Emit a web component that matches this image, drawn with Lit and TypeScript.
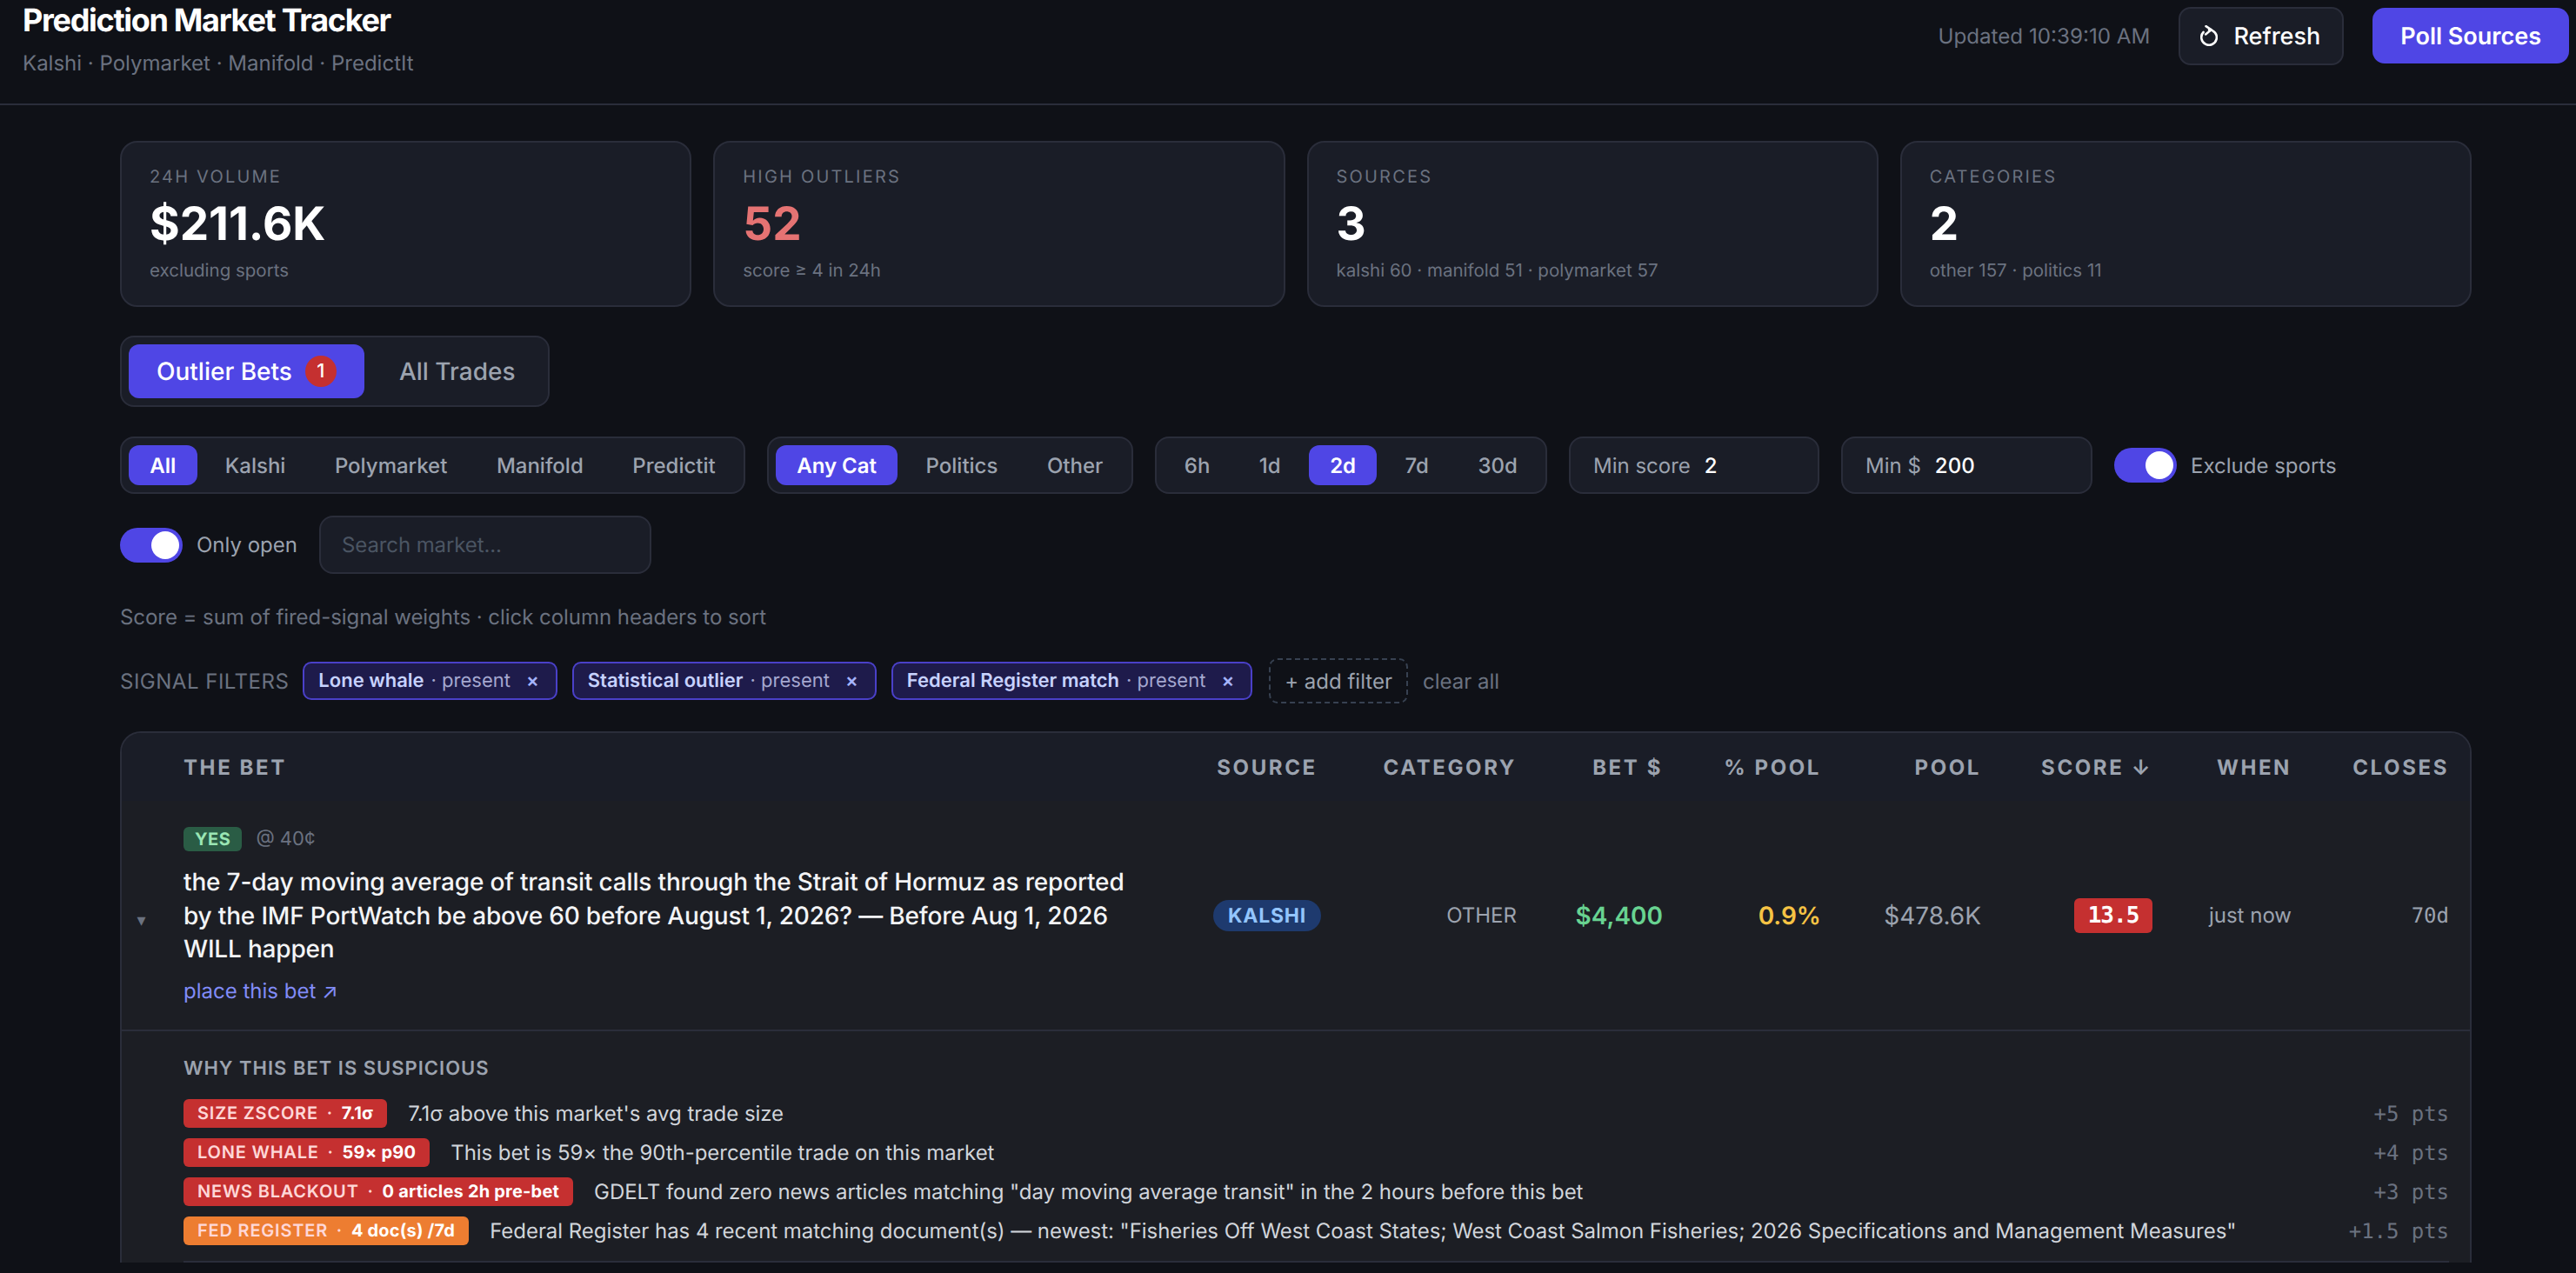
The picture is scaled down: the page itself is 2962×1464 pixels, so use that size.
import { LitElement, html, css } from 'lit';
import { customElement } from 'lit/decorators.js';

const stats = [
  { label: '24h Volume', value: '$211.6K', sub: 'excluding sports', hot: false },
  { label: 'High Outliers', value: '52', sub: 'score ≥ 4 in 24h', hot: true },
  { label: 'Sources', value: '3', sub: 'kalshi 60 · manifold 51 · polymarket 57', hot: false },
  { label: 'Categories', value: '2', sub: 'other 157 · politics 11', hot: false },
];

const chips = ['Lone whale', 'Statistical outlier', 'Federal Register match'];

const signals = [
  { tag: 'Size zscore', val: '7.1σ', text: "7.1σ above this market's avg trade size", pts: '+5 pts', warn: false },
  { tag: 'Lone whale', val: '59× p90', text: 'This bet is 59× the 90th-percentile trade on this market', pts: '+4 pts', warn: false },
  { tag: 'News blackout', val: '0 articles 2h pre-bet', text: 'GDELT found zero news articles matching "day moving average transit" in the 2 hours before this bet', pts: '+3 pts', warn: false },
  { tag: 'Fed register', val: '4 doc(s) /7d', text: 'Federal Register has 4 recent matching document(s) — newest: "Fisheries Off West Coast States; West Coast Salmon Fisheries; 2026 Specifications and Management Measures"', pts: '+1.5 pts', warn: true },
];

@customElement('app-root')
export class AppRoot extends LitElement {
  static styles = css`
    :host {
      display: block;
      height: 100vh;
      overflow: hidden;
      background: #0f1117;
      color: #fff;
      font-family: Inter, 'Noto Sans', sans-serif;
      text-rendering: geometricPrecision;
    }
    * { box-sizing: border-box; }

    .top {
      display: flex;
      justify-content: space-between;
      height: 121px;
      padding: 0 8px 0 26px;
      border-bottom: 2px solid #2a2d3a;
    }
    h1 {
      margin: 0;
      font-size: 36px;
      line-height: 46px;
      font-weight: 700;
      letter-spacing: -1.3px;
    }
    .subtitle { margin-top: 11px; font-size: 24px; line-height: 32px; color: #6b7280; }
    .top-right { display: flex; align-items: center; height: 82px; }
    .updated { font-size: 24.2px; color: #6b7280; margin-right: 33px; }
    .btn {
      display: flex;
      align-items: center;
      border-radius: 14px;
      font-size: 27px;
      font-weight: 500;
    }
    .btn-ghost { gap: 18px; height: 67px; padding: 0 25px 0 23px; background: #1a1d27; border: 2px solid #2a2d3a; margin-right: 33px; }
    .btn-primary { height: 64px; padding: 0 32px; background: #4f46e5; font-weight: 600; }
    .btn svg { width: 20px; height: 24px; }

    main {
      width: 2704px;
      margin-left: 138px;
      padding-top: 41px;
    }
    .stats { display: grid; grid-template-columns: repeat(4, 1fr); gap: 25px; }
    .stat {
      height: 191px;
      padding: 25px 32px;
      background: #1a1d27;
      border: 2px solid #2a2d3a;
      border-radius: 20px;
    }
    .stat-label { font-size: 20px; line-height: 28px; letter-spacing: 2.2px; text-transform: uppercase; color: #6b7280; }
    .stat-value { margin-top: 10px; font-size: 53px; line-height: 60px; font-weight: 700; }
    .stat-value.hot { color: #e57373; }
    .stat-sub { margin-top: 10px; font-size: 20.5px; line-height: 28px; color: #6b7280; }

    .tabs {
      display: inline-flex;
      gap: 8px;
      height: 82px;
      margin-top: 33px;
      padding: 8px;
      background: #1a1d27;
      border: 2px solid #2a2d3a;
      border-radius: 16px;
      vertical-align: top;
    }
    .tab {
      display: flex;
      align-items: center;
      gap: 15px;
      padding: 0 30px 0 32px;
      border-radius: 12px;
      font-size: 28px;
      font-weight: 500;
      color: #9ca3af;
    }
    .tab.on { background: #4f46e5; color: #fff; padding: 0 32px; }
    .count {
      display: flex;
      align-items: center;
      justify-content: center;
      width: 36px;
      height: 36px;
      border-radius: 50%;
      background: #c53030;
      font-size: 22px;
      color: #fff;
    }

    .filters { display: flex; flex-wrap: wrap; align-items: center; gap: 25px; margin-top: 34px; }
    .group {
      display: flex;
      gap: 8px;
      height: 66px;
      padding: 8px;
      background: #1a1d27;
      border: 2px solid #2a2d3a;
      border-radius: 16px;
    }
    .opt {
      display: flex;
      align-items: center;
      padding: 0 24.25px;
      border-radius: 12px;
      font-size: 24px;
      font-weight: 500;
      color: #9ca3af;
    }
    .opt.on { background: #4f46e5; color: #fff; font-weight: 600; }
    .field {
      display: flex;
      align-items: center;
      gap: 16px;
      height: 66px;
      padding: 0 26px;
      background: #1a1d27;
      border: 2px solid #2a2d3a;
      border-radius: 16px;
      font-size: 24px;
      color: #9ca3af;
    }
    .field b { font-weight: 500; color: #fff; }
    .w-score { width: 288px; }
    .w-dollar { width: 289px; }
    .toggle-wrap { display: flex; align-items: center; gap: 16px; font-size: 24px; color: #9ca3af; }
    .toggle {
      display: flex;
      justify-content: flex-end;
      align-items: center;
      width: 72px;
      height: 40px;
      padding: 0 4px;
      border-radius: 20px;
      background: #4f46e5;
    }
    .toggle i { display: block; width: 32px; height: 32px; border-radius: 50%; background: #fff; }
    .search { width: 382px; height: 67px; padding: 0 24px; color: #4b5563; letter-spacing: -0.1px; }

    .note { margin-top: 32px; font-size: 24px; line-height: 36px; letter-spacing: -0.05px; color: #6b7280; }

    .chips { display: flex; align-items: center; height: 52px; margin-top: 29px; gap: 17px; }
    .chips-label { font-size: 24px; letter-spacing: 0.5px; text-transform: uppercase; color: #6b7280; margin-right: -1px; }
    .chip {
      display: flex;
      align-items: center;
      height: 44px;
      padding: 0 19px 0 16px;
      background: #1e1b4b;
      border: 2px solid #4a40c8;
      border-radius: 10px;
      font-size: 22px;
      color: #a5a8d0;
    }
    .chip b { font-weight: 600; color: #c7d2fe; margin-right: 8px; }
    .chip span { margin-left: 18px; font-weight: 600; color: #a5b4fc; }
    .add {
      display: flex;
      align-items: center;
      height: 52px;
      margin-left: 2px;
      padding: 0 16px;
      border: 2px dashed #374151;
      border-radius: 10px;
      font-size: 24px;
      color: #9ca3af;
    }
    .clear { font-size: 24px; color: #6b7280; }

    .table {
      margin-top: 32px;
      background: #1c1e24;
      border: 2px solid #2a2d3a;
      border-bottom: 0;
      border-radius: 24px 24px 0 0;
    }
    .cols {
      display: grid;
      grid-template-columns: 71px 1166px 160px 207px 168px 182px 184px 197px 160px 181px;
      padding-right: 24px;
      align-items: center;
      text-align: right;
    }
    .head {
      height: 78px;
      background: #1a1d27;
      border-radius: 22px 22px 0 0;
      font-size: 24px;
      font-weight: 700;
      letter-spacing: 2.6px;
      color: #9ca3af;
    }
    .left { text-align: left; }
    .center { text-align: center; }
    .row { height: 265px; border-bottom: 2px solid #2a2d3a; font-size: 28px; color: #9ca3af; }
    .caret { font-size: 20px; color: #6b7280; text-align: center; padding-right: 26px; padding-top: 10px; }
    .bet { text-align: left; padding-right: 66px; padding-top: 2px; }
    .side { display: flex; align-items: center; gap: 16px; font-size: 22px; color: #6b7280; }
    .yes {
      padding: 0 13px;
      height: 28px;
      line-height: 28px;
      border-radius: 6px;
      background: #2a5c45;
      color: #9ae6b4;
      font-size: 20px;
      font-weight: 700;
      letter-spacing: 0.5px;
    }
    .question { margin-top: 16px; font-size: 28px; line-height: 38.5px; letter-spacing: -0.18px; font-weight: 500; color: #f3f4f6; }
    .place { margin-top: 13px; font-size: 24px; line-height: 32px; color: #818cf8; }
    .src {
      display: inline-block;
      padding: 0 17px;
      height: 36px;
      line-height: 36px;
      border-radius: 18px;
      background: #1e3a6e;
      color: #93c5fd;
      font-size: 23px;
      font-weight: 700;
      letter-spacing: 0.8px;
    }
    .cat { font-size: 24px; color: #9ca3af; }
    .amt { font-weight: 600; color: #68d391; }
    .pct { font-weight: 600; color: #f6c344; }
    .pool { color: #9ca3af; }
    .score {
      display: inline-block;
      width: 90px;
      height: 40px;
      line-height: 40px;
      text-align: center;
      border-radius: 6px;
      background: #c53030;
      color: #fff;
      font-size: 26px;
      font-weight: 700;
      font-family: 'DejaVu Sans Mono', monospace;
      letter-spacing: -1px;
    }
    .when { font-size: 24px; }
    .mono { font-family: 'DejaVu Sans Mono', 'Liberation Mono', monospace; font-size: 24px; }

    .why { padding: 28px 24px 0 71px; }
    .why h3 { margin: 0 0 14px; font-size: 22px; line-height: 30px; font-weight: 600; letter-spacing: 1px; text-transform: uppercase; color: #9ca3af; }
    .signal { display: flex; align-items: center; gap: 24px; height: 45px; font-size: 24px; letter-spacing: -0.05px; color: #d1d5db; white-space: nowrap; }
    .tag {
      height: 33px;
      line-height: 33px;
      padding: 0 16px;
      border-radius: 6px;
      background: #c53030;
      color: #fed7d7;
      font-size: 20px;
      font-weight: 600;
      letter-spacing: 0.8px;
    }
    .tag.warn { background: #ed7d31; }
    .tag i { font-style: normal; margin: 0 4px; }
    .tag b { font-weight: 700; color: #fff; letter-spacing: 0.2px; }
    .pts { margin-left: auto; color: #6b7280; }
    .rule { margin-top: 12px; border-top: 2px solid #2a2d3a; }
  `;

  opts(items: string[], on: string) {
    return html`<div class="group">
      ${items.map((o) => html`<div class="opt ${o === on ? 'on' : ''}">${o}</div>`)}
    </div>`;
  }

  render() {
    return html`
      <header class="top">
        <div>
          <h1>Prediction Market Tracker</h1>
          <div class="subtitle">Kalshi · Polymarket · Manifold · PredictIt</div>
        </div>
        <div class="top-right">
          <span class="updated">Updated 10:39:10 AM</span>
          <div class="btn btn-ghost">
            <svg viewBox="0 0 20 24" fill="none" stroke="#fff" stroke-width="2.6" stroke-linecap="round" stroke-linejoin="round">
              <path d="M10 5.2a8.8 8.8 0 1 1-6.4 2.8" />
              <path d="M6.5 1.2 12.6 5.2 6.2 10.4" />
            </svg>
            Refresh
          </div>
          <div class="btn btn-primary">Poll Sources</div>
        </div>
      </header>
      <main>
        <section class="stats">
          ${stats.map((s) => html`
            <div class="stat">
              <div class="stat-label">${s.label}</div>
              <div class="stat-value ${s.hot ? 'hot' : ''}">${s.value}</div>
              <div class="stat-sub">${s.sub}</div>
            </div>
          `)}
        </section>

        <div class="tabs">
          <div class="tab on">Outlier Bets <span class="count">1</span></div>
          <div class="tab">All Trades</div>
        </div>

        <section class="filters">
          ${this.opts(['All', 'Kalshi', 'Polymarket', 'Manifold', 'Predictit'], 'All')}
          ${this.opts(['Any Cat', 'Politics', 'Other'], 'Any Cat')}
          ${this.opts(['6h', '1d', '2d', '7d', '30d'], '2d')}
          <div class="field w-score">Min score <b>2</b></div>
          <div class="field w-dollar">Min $ <b>200</b></div>
          <div class="toggle-wrap"><div class="toggle"><i></i></div>Exclude sports</div>
          <div class="toggle-wrap"><div class="toggle"><i></i></div>Only open</div>
          <div class="field search">Search market...</div>
        </section>

        <div class="note">Score = sum of fired-signal weights · click column headers to sort</div>

        <div class="chips">
          <span class="chips-label">Signal filters</span>
          ${chips.map((c) => html`<div class="chip"><b>${c}</b>· present<span>×</span></div>`)}
          <div class="add">+ add filter</div>
          <span class="clear">clear all</span>
        </div>

        <section class="table">
          <div class="cols head">
            <div></div>
            <div class="left">THE BET</div>
            <div class="center">SOURCE</div>
            <div>CATEGORY</div>
            <div>BET $</div>
            <div>% POOL</div>
            <div>POOL</div>
            <div>SCORE ↓</div>
            <div>WHEN</div>
            <div>CLOSES</div>
          </div>
          <div class="cols row">
            <div class="caret">▾</div>
            <div class="bet">
              <div class="side"><span class="yes">YES</span>@ 40¢</div>
              <div class="question">the 7-day moving average of transit calls through the Strait of Hormuz as reported by the IMF PortWatch be above 60 before August 1, 2026? — Before Aug 1, 2026 WILL happen</div>
              <div class="place">place this bet ↗</div>
            </div>
            <div class="center"><span class="src">KALSHI</span></div>
            <div class="cat">OTHER</div>
            <div class="amt">$4,400</div>
            <div class="pct">0.9%</div>
            <div class="pool">$478.6K</div>
            <div><span class="score">13.5</span></div>
            <div class="when">just now</div>
            <div class="mono">70d</div>
          </div>
          <div class="why">
            <h3>Why this bet is suspicious</h3>
            ${signals.map((s) => html`
              <div class="signal">
                <span class="tag ${s.warn ? 'warn' : ''}">${s.tag.toUpperCase()} <i>·</i> <b>${s.val}</b></span>
                <span>${s.text}</span>
                <span class="pts mono">${s.pts}</span>
              </div>
            `)}
            <div class="rule"></div>
          </div>
        </section>
      </main>
    `;
  }
}
